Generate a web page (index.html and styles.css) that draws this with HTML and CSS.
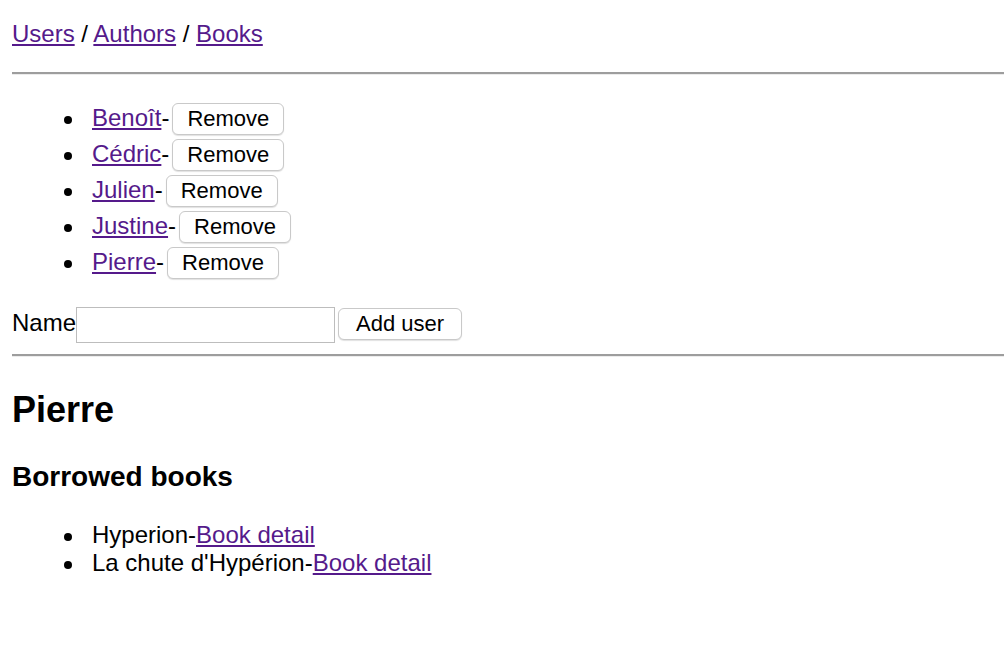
FILE: index.html
```html
<!DOCTYPE html>
<html>
<head>
<meta charset="utf-8">
<title>Library</title>
<link rel="stylesheet" href="styles.css">
</head>
<body>
<p class="crumbs"><a href="#">Users</a> / <a href="#">Authors</a> / <a href="#">Books</a></p>
<hr class="rule">
<ul class="users">
  <li><a href="#">Benoît</a>-<button class="btn">Remove</button></li>
  <li><a href="#">Cédric</a>-<button class="btn">Remove</button></li>
  <li><a href="#">Julien</a>-<button class="btn">Remove</button></li>
  <li><a href="#">Justine</a>-<button class="btn">Remove</button></li>
  <li><a href="#">Pierre</a>-<button class="btn">Remove</button></li>
</ul>
<form class="add-form">Name<input class="field" type="text"><button class="btn btn-add" type="button">Add user</button></form>
<hr class="rule rule-low">
<h2 class="title">Pierre</h2>
<h3 class="subtitle">Borrowed books</h3>
<ul class="books">
  <li>Hyperion-<a href="#">Book detail</a></li>
  <li>La chute d'Hypérion-<a href="#">Book detail</a></li>
</ul>
</body>
</html>
```

FILE: styles.css
```css
html, body {
  background: #ffffff;
}
body {
  margin: 0;
  padding: 20px 0 0 12px;
  font-family: "Liberation Sans", Arial, sans-serif;
  font-size: 24px;
  color: #000000;
}
a {
  color: #551a8b;
  text-decoration: underline;
}
.crumbs {
  margin: 0 0 24px;
}
.rule {
  height: 0;
  margin: 12px 0;
  border: none;
  border-top: 2px solid #9d9d9d;
  border-bottom: 1px solid #ececec;
}
.rule-low {
  margin: 11px 0 12px;
}
.users, .books {
  margin: 26px 0 25px;
  padding-left: 80px;
  list-style: none;
}
.books {
  margin-top: 27px;
}
.users li::before, .books li::before {
  content: "";
  display: inline-block;
  width: 8px;
  height: 8px;
  border-radius: 50%;
  background: #000000;
  margin-left: -28px;
  margin-right: 20px;
  vertical-align: 2px;
}
.btn {
  font-family: "Liberation Sans", Arial, sans-serif;
  font-size: 22px;
  line-height: 28px;
  height: 32px;
  padding: 1px 14px 1px;
  margin: 2px 0 2px 3px;
  border: 1px solid #c9c9c9;
  border-radius: 6px;
  background: #ffffff;
  color: #000000;
  box-shadow: 0 1px 1px rgba(0, 0, 0, 0.12);
  vertical-align: baseline;
}
.btn-add {
  padding: 1px 17px 1px;
}
.add-form {
  margin: 0;
}
.field {
  width: 259px;
  height: 36px;
  box-sizing: border-box;
  margin: 0;
  padding: 1px 2px 5px;
  font-family: "Liberation Sans", Arial, sans-serif;
  font-size: 24px;
  line-height: 28px;
  border: 1px solid #bdbdbd;
  border-radius: 0;
  vertical-align: baseline;
}
.title {
  font-size: 36px;
  margin: 32px 0 30px;
}
.subtitle {
  font-size: 28px;
  margin: 28px 0;
}
```
